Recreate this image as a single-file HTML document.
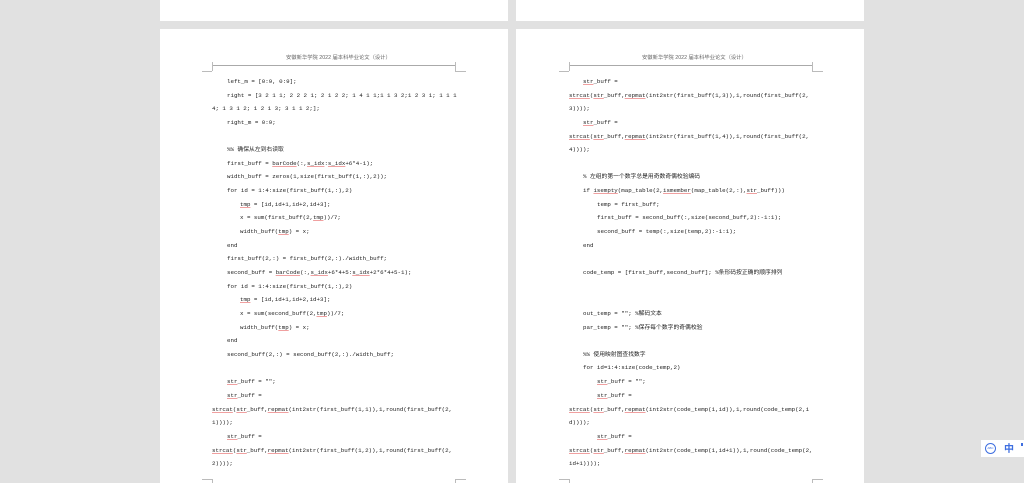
<!DOCTYPE html>
<html><head><meta charset="utf-8"><style>
html,body{margin:0;width:1024px;height:483px;overflow:hidden;}
body{background:#e1e1e1;position:relative;font-family:"Liberation Mono","Noto Sans CJK SC",monospace;}
.pg{position:absolute;background:#fff;}
.l{position:absolute;white-space:pre;font-size:5.8px;line-height:10px;height:10px;color:#222;}
.hd{position:absolute;font-family:"Liberation Sans","Noto Sans CJK SC",sans-serif;font-size:5.3px;color:#666;white-space:pre;}
.hl{position:absolute;height:1px;background:#aaa;}
.v{position:absolute;width:1px;background:#bbb;}
.h{position:absolute;height:1px;background:#bbb;}
u{text-decoration:underline solid #f0a0a0;text-decoration-thickness:0.5px;text-underline-offset:1px;}
</style></head><body>
<div class="pg" style="left:160px;top:0;width:348px;height:21px"></div>
<div class="pg" style="left:516px;top:0;width:348px;height:21px"></div>
<div class="pg" style="left:160px;top:29px;width:348px;height:454px"></div>
<div class="pg" style="left:516px;top:29px;width:348px;height:454px"></div>

<div class="hd" style="left:286px;top:53px">安徽新华学院 2022 届本科毕业论文（设计）</div>
<div class="hl" style="left:212px;top:65px;width:244px"></div>
<div class="v" style="left:212px;top:62px;height:9px"></div><div class="h" style="left:202px;top:71px;width:10px"></div>
<div class="v" style="left:455px;top:62px;height:9px"></div><div class="h" style="left:455px;top:71px;width:11px"></div>
<div class="v" style="left:212px;top:479px;height:6px"></div><div class="h" style="left:202px;top:479px;width:10px"></div>
<div class="v" style="left:455px;top:479px;height:6px"></div><div class="h" style="left:455px;top:479px;width:11px"></div>
<div class="hd" style="left:642px;top:53px">安徽新华学院 2022 届本科毕业论文（设计）</div>
<div class="hl" style="left:569px;top:65px;width:244px"></div>
<div class="v" style="left:569px;top:62px;height:9px"></div><div class="h" style="left:559px;top:71px;width:10px"></div>
<div class="v" style="left:812px;top:62px;height:9px"></div><div class="h" style="left:812px;top:71px;width:11px"></div>
<div class="v" style="left:569px;top:479px;height:6px"></div><div class="h" style="left:559px;top:479px;width:10px"></div>
<div class="v" style="left:812px;top:479px;height:6px"></div><div class="h" style="left:812px;top:479px;width:11px"></div>

<div class="l" style="left:227px;top:77px">left_m = [0:9, 0:9];</div>
<div class="l" style="left:227px;top:91px">right = [3 2 1 1; 2 2 2 1; 2 1 2 2; 1 4 1 1;1 1 3 2;1 2 3 1; 1 1 1</div>
<div class="l" style="left:212px;top:104px">4; 1 3 1 2; 1 2 1 3; 3 1 1 2;];</div>
<div class="l" style="left:227px;top:118px">right_m = 0:9;</div>
<div class="l" style="left:227px;top:145px">%% 确保从左到右读取</div>
<div class="l" style="left:227px;top:159px">first_buff = <u>barCode</u>(:,<u>s_idx</u>:<u>s_idx</u>+6*4-1);</div>
<div class="l" style="left:227px;top:172px">width_buff = zeros(1,size(first_buff(1,:),2));</div>
<div class="l" style="left:227px;top:186px">for id = 1:4:size(first_buff(1,:),2)</div>
<div class="l" style="left:240px;top:200px"><u>tmp</u> = [id,id+1,id+2,id+3];</div>
<div class="l" style="left:240px;top:213px">x = sum(first_buff(2,<u>tmp</u>))/7;</div>
<div class="l" style="left:240px;top:227px">width_buff(<u>tmp</u>) = x;</div>
<div class="l" style="left:227px;top:241px">end</div>
<div class="l" style="left:227px;top:254px">first_buff(2,:) = first_buff(2,:)./width_buff;</div>
<div class="l" style="left:227px;top:268px">second_buff = <u>barCode</u>(:,<u>s_idx</u>+6*4+5:<u>s_idx</u>+2*6*4+5-1);</div>
<div class="l" style="left:227px;top:282px">for id = 1:4:size(first_buff(1,:),2)</div>
<div class="l" style="left:240px;top:295px"><u>tmp</u> = [id,id+1,id+2,id+3];</div>
<div class="l" style="left:240px;top:309px">x = sum(second_buff(2,<u>tmp</u>))/7;</div>
<div class="l" style="left:240px;top:323px">width_buff(<u>tmp</u>) = x;</div>
<div class="l" style="left:227px;top:336px">end</div>
<div class="l" style="left:227px;top:350px">second_buff(2,:) = second_buff(2,:)./width_buff;</div>
<div class="l" style="left:227px;top:377px"><u>str</u>_buff = "";</div>
<div class="l" style="left:227px;top:391px"><u>str</u>_buff =</div>
<div class="l" style="left:212px;top:405px"><u>strcat</u>(<u>str</u>_buff,<u>repmat</u>(int2str(first_buff(1,1)),1,round(first_buff(2,</div>
<div class="l" style="left:212px;top:418px">1))));</div>
<div class="l" style="left:227px;top:432px"><u>str</u>_buff =</div>
<div class="l" style="left:212px;top:446px"><u>strcat</u>(<u>str</u>_buff,<u>repmat</u>(int2str(first_buff(1,2)),1,round(first_buff(2,</div>
<div class="l" style="left:212px;top:459px">2))));</div>

<div class="l" style="left:583px;top:77px"><u>str</u>_buff =</div>
<div class="l" style="left:569px;top:91px"><u>strcat</u>(<u>str</u>_buff,<u>repmat</u>(int2str(first_buff(1,3)),1,round(first_buff(2,</div>
<div class="l" style="left:569px;top:104px">3))));</div>
<div class="l" style="left:583px;top:118px"><u>str</u>_buff =</div>
<div class="l" style="left:569px;top:132px"><u>strcat</u>(<u>str</u>_buff,<u>repmat</u>(int2str(first_buff(1,4)),1,round(first_buff(2,</div>
<div class="l" style="left:569px;top:145px">4))));</div>
<div class="l" style="left:583px;top:172px">% 左组的第一个数字总是用奇数奇偶校验编码</div>
<div class="l" style="left:583px;top:186px">if <u>isempty</u>(map_table(2,<u>ismember</u>(map_table(2,:),<u>str</u>_buff)))</div>
<div class="l" style="left:597px;top:200px">temp = first_buff;</div>
<div class="l" style="left:597px;top:213px">first_buff = second_buff(:,size(second_buff,2):-1:1);</div>
<div class="l" style="left:597px;top:227px">second_buff = temp(:,size(temp,2):-1:1);</div>
<div class="l" style="left:583px;top:241px">end</div>
<div class="l" style="left:583px;top:268px">code_temp = [first_buff,second_buff]; %条形码按正确的顺序排列</div>
<div class="l" style="left:583px;top:309px">out_temp = ""; %解码文本</div>
<div class="l" style="left:583px;top:323px">par_temp = ""; %保存每个数字的奇偶校验</div>
<div class="l" style="left:583px;top:350px">%% 使用映射图查找数字</div>
<div class="l" style="left:583px;top:363px">for id=1:4:size(code_temp,2)</div>
<div class="l" style="left:597px;top:377px"><u>str</u>_buff = "";</div>
<div class="l" style="left:597px;top:391px"><u>str</u>_buff =</div>
<div class="l" style="left:569px;top:405px"><u>strcat</u>(<u>str</u>_buff,<u>repmat</u>(int2str(code_temp(1,id)),1,round(code_temp(2,i</div>
<div class="l" style="left:569px;top:418px">d))));</div>
<div class="l" style="left:597px;top:432px"><u>str</u>_buff =</div>
<div class="l" style="left:569px;top:446px"><u>strcat</u>(<u>str</u>_buff,<u>repmat</u>(int2str(code_temp(1,id+1)),1,round(code_temp(2,</div>
<div class="l" style="left:569px;top:459px">id+1))));</div>

<div style="position:absolute;left:981px;top:440px;width:50px;height:17px;background:#fff;"></div>
<div style="position:absolute;left:985px;top:443px;width:9px;height:9px;border:1.3px solid #3f6fe0;border-radius:50%;font:3px 'Liberation Sans',sans-serif;color:#3f6fe0;text-align:center;line-height:9px;">ABC</div>
<div style="position:absolute;left:1004px;top:441px;font:bold 10px 'Noto Sans CJK SC',sans-serif;color:#3f6fe0;line-height:13px;">中</div>
<div style="position:absolute;left:1021px;top:443px;width:2px;height:3px;background:#3f6fe0;"></div>
</body></html>
